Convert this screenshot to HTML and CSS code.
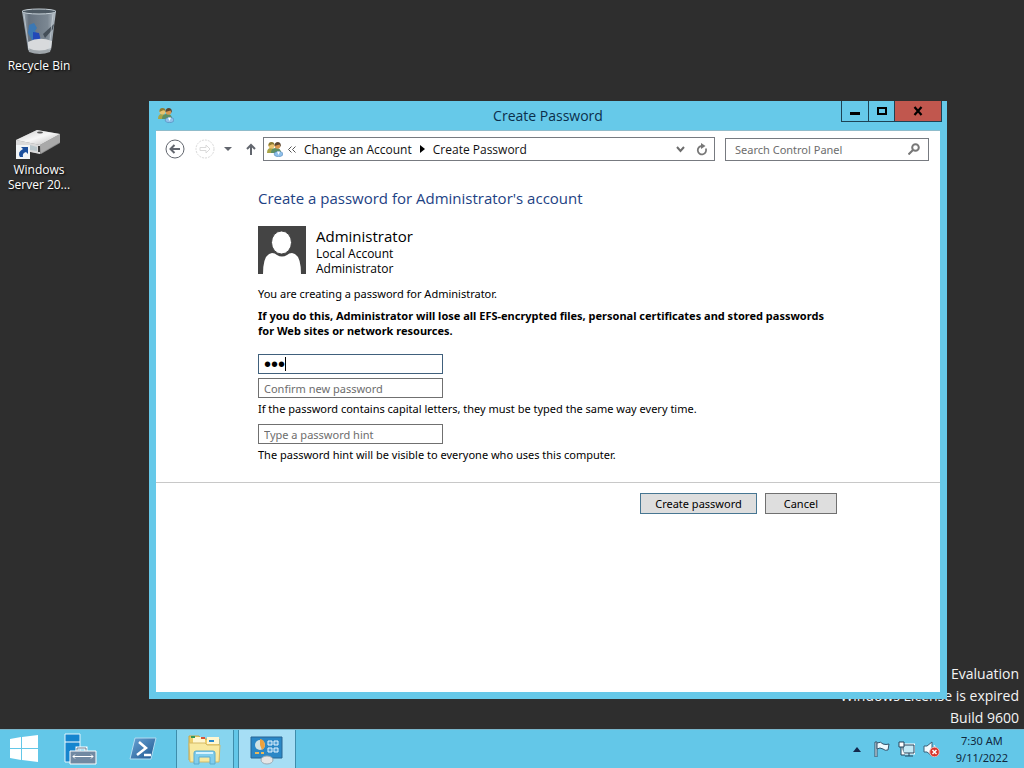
FILE: index.html
```html
<!DOCTYPE html>
<html lang="en">
<head>
<meta charset="UTF-8">
<meta name="viewport" content="width=device-width,initial-scale=1">
<title>Create Password</title>
<link rel="stylesheet" href="styles.css">
</head>
<body>

<!-- shared icon -->
<svg class="defs" width="0" height="0">
  <symbol id="users" viewBox="0 0 16 16">
    <path d="M0 12q0-5 4-5 4 0 4 5z" fill="#a9a548"/>
    <path d="M4 12q0-5 5-5t5 5z" fill="#5f8f64"/>
    <circle cx="4.500" cy="4.500" r="3" fill="#e9c36f"/>
    <path d="M1.500 5q-.5-4 3-4 3 0 3 3-2-1.500-4 0z" fill="#8c7a32"/>
    <circle cx="10.500" cy="5" r="2.800" fill="#d9964e"/>
    <path d="M7.500 5q0-4 3.500-4 3.500.5 2.700 5l-1.200-2.500z" fill="#5b4632"/>
    <ellipse cx="11.500" cy="13" rx="4.300" ry="2.600" fill="#8fc0ea" stroke="#4d83b8" stroke-width=".6"/>
    <path d="M10 10.500l1.500 3.500 1.500-3.500z" fill="#fff"/>
  </symbol>
</svg>

<main class="desktop">
  <div class="shortcuts">
    <a class="shortcut" href="#recycle">
      <svg width="48" height="48" viewBox="0 0 48 48">
        <defs>
          <linearGradient id="bin" x1="0" x2="1"><stop offset="0" stop-color="#a9b5bf"/><stop offset=".2" stop-color="#65717e"/><stop offset=".75" stop-color="#7b8792"/><stop offset="1" stop-color="#b7c0c8"/></linearGradient>
        </defs>
        <path d="M7 3h34l-5 39q-12 5-23 0z" fill="url(#bin)"/>
        <ellipse cx="24" cy="3.500" rx="17" ry="2.500" fill="#4d5963" stroke="#c6d0d7"/>
        <path d="M14 17l5-2 3 5-2 3 4 5-6 6-5-9z" fill="#3b78b4"/>
        <path d="M18 24l6 1 2 8-8 2z" fill="#2349b8"/>
        <path d="M28 26l11-10-1 5-8 9z" fill="#444e58"/>
        <path d="M13 34q11-6 24-1l-1 8q-12 5-23 0z" fill="#d8dadc"/>
        <path d="M13 40q11 5 23 0l-1 4q-10 4-21 0z" fill="#9fa6ab"/>
        <path d="M9 6l5 36M38 6l-4 36" stroke="#d5dde2" stroke-width="1" opacity=".6"/>
      </svg>
      <span>Recycle Bin</span>
    </a>
    <a class="shortcut" href="#server">
      <svg width="48" height="48" viewBox="0 0 48 48">
        <defs>
          <linearGradient id="disk" x2="1" y2="1"><stop offset="0" stop-color="#c9c9c9"/><stop offset=".5" stop-color="#f7f7f7"/><stop offset="1" stop-color="#b5b5b5"/></linearGradient>
        </defs>
        <path d="M1 28L22 18 45 22v9L26 42 1 37z" fill="#8d8d8d"/>
        <path d="M1 28L22 18 45 22 25 33z" fill="url(#disk)"/>
        <path d="M1 28l24 5v9L1 37z" fill="#dadada"/>
        <path d="M25 33l20-11v8L26 41z" fill="#a9a9a9"/>
        <path d="M15 33l7 2v4l-7-1z" fill="#b9c6cb"/>
        <path d="M24 34v6" stroke="#3c3c3c" stroke-width="2"/>
        <ellipse cx="25" cy="20.500" rx="3" ry="1" fill="#555"/>
        <path d="M1 33h14v14H1z" fill="#f1f4f6"/>
        <path d="M5 45q-3-5 3-8l-2-2h7v7l-2-2q-4 1-3 5z" fill="#1b4f9c"/>
      </svg>
      <span>Windows Server 20...</span>
    </a>
  </div>

  <div class="watermark">
    <p>Evaluation</p>
    <p>Windows License is expired</p>
    <p>Build 9600</p>
  </div>

  <section class="window">
    <header class="titlebar">
      <svg class="app-icon" width="16" height="16"><use href="#users"/></svg>
      <h1>Create Password</h1>
      <div class="controls">
        <button class="min" aria-label="Minimize"><svg width="12" height="10"><path d="M1 6h10v3H1z"/></svg></button>
        <button class="max" aria-label="Maximize"><svg width="12" height="10"><path d="M2 2h8v6H2z" fill="none" stroke="#000" stroke-width="2"/></svg></button>
        <button class="close" aria-label="Close"><svg width="12" height="10"><path d="M2.500 1l7 8M9.500 1l-7 8" stroke="#000" stroke-width="2.200"/></svg></button>
      </div>
    </header>

    <div class="page">
      <nav class="navbar">
        <button class="nav-btn" aria-label="Back"><svg width="20" height="20" fill="none" stroke="#62666e"><circle cx="10" cy="10" r="9"/><path d="M15 10H6M9.500 6L5.500 10l4 4" stroke-width="2"/></svg></button>
        <button class="nav-btn forward" aria-label="Forward"><svg width="20" height="20" fill="none" stroke="#dadada"><circle cx="10" cy="10" r="9" stroke-dasharray="2 1"/><path d="M5 8.500h6V6l4 4-4 4v-2.500H5z"/></svg></button>
        <button class="nav-btn recent" aria-label="Recent pages"><svg width="8" height="5"><path d="M0 0h8L4 4z" fill="#62666e"/></svg></button>
        <button class="nav-btn up" aria-label="Up"><svg width="10" height="12" fill="none" stroke="#62666e" stroke-width="2"><path d="M5 12V2M1 6l4-4 4 4"/></svg></button>
        <div class="address">
          <svg width="16" height="16"><use href="#users"/></svg>
          <svg class="more" width="8" height="7" fill="none" stroke="#555"><path d="M3.500 .5l-3 3 3 3M7.500 .5l-3 3 3 3"/></svg>
          <a href="#change">Change an Account</a>
          <svg class="sep" width="5" height="8"><path d="M0 0l5 4-5 4z"/></svg>
          <a href="#create">Create Password</a>
          <div class="address-tools">
            <button class="nav-btn" aria-label="Previous locations"><svg width="9" height="7" fill="none" stroke="#6d6d6d" stroke-width="2"><path d="M1 1l3.500 4L8 1"/></svg></button>
            <button class="nav-btn" aria-label="Refresh"><svg width="12" height="13" fill="none" stroke="#777" stroke-width="1.800"><path d="M9.800 5.500A4.200 4.200 0 1 1 6 3"/><path d="M5 0l4.500 3L5 6z" fill="#777" stroke="none"/></svg></button>
          </div>
        </div>
        <div class="search">
          <input type="search" placeholder="Search Control Panel" aria-label="Search Control Panel">
          <svg width="12" height="12" fill="none" stroke="#777" stroke-width="2"><circle cx="7.500" cy="4.500" r="3.300"/><path d="M5 7l-4.500 4.500"/></svg>
        </div>
      </nav>

      <form class="account">
        <div class="fields">
          <h2>Create a password for Administrator's account</h2>
          <div class="user">
            <svg width="48" height="48" viewBox="0 0 48 48"><path d="M0 0h48v48H0z" fill="#444"/><path d="M5 48q0-20 9-21 3 0 5 2 5 3 10 0 2-2 5-2 9 1 9 21z" fill="#fff"/><ellipse cx="23.500" cy="16.500" rx="10" ry="11.500" fill="#fff" stroke="#444" stroke-width="1"/></svg>
            <div>
              <strong>Administrator</strong>
              <p>Local Account</p>
              <p>Administrator</p>
            </div>
          </div>
          <p class="intro">You are creating a password for Administrator.</p>
          <p class="warning">If you do this, Administrator will lose all EFS-encrypted files, personal certificates and stored passwords for Web sites or network resources.</p>
          <div class="pass-wrap">
            <input class="field current" type="password" value="abc" aria-label="New password">
            <i class="caret"></i>
          </div>
          <input class="field" type="password" placeholder="Confirm new password" aria-label="Confirm new password">
          <p class="note">If the password contains capital letters, they must be typed the same way every time.</p>
          <input class="field" type="text" placeholder="Type a password hint" aria-label="Type a password hint">
          <p class="note">The password hint will be visible to everyone who uses this computer.</p>
        </div>
        <div class="actions">
          <button type="submit" class="btn primary">Create password</button>
          <button type="button" class="btn">Cancel</button>
        </div>
      </form>
    </div>
  </section>
</main>

<footer class="taskbar">
  <button class="start" aria-label="Start">
    <svg width="28" height="28" fill="#fff"><path d="M0 4l11-2v11H0zM12 2l16-2v13H12zM0 14h11v11L0 23zM12 14h16v13l-16-2z"/></svg>
  </button>
  <button class="task" aria-label="Server Manager">
    <svg width="34" height="34"><path d="M1 2h15v28H1z" fill="#1585cf" stroke="#e3f5fc"/><path d="M1 10h15" stroke="#fff"/><path d="M13 19v-3h9v3" fill="none" stroke="#fff" stroke-width="3"/><path d="M13 19v-3h9v3" fill="none" stroke="#667a8e"/><path d="M6 19h26v13H6z" fill="#7189a2" stroke="#fff"/><path d="M9 24.500h20M11 22.500l-2 2 2 2M27 22.500l2 2-2 2" fill="none" stroke="#fff"/></svg>
  </button>
  <button class="task" aria-label="Windows PowerShell">
    <svg width="30" height="26"><defs><linearGradient id="ps" x2="1" y2="1"><stop offset="0" stop-color="#6ba4d6"/><stop offset="1" stop-color="#1c568f"/></linearGradient></defs><path d="M7 2h21l-5 21H2z" fill="url(#ps)" stroke="#b3dcf1"/><path d="M11 6l7 6-9 7M16 19h7" fill="none" stroke="#fff" stroke-width="2.500"/></svg>
  </button>
  <button class="task open" aria-label="File Explorer">
    <svg width="34" height="32"><path d="M1 3h10l2 3h18v21H1z" fill="#edcf6d" stroke="#c6a548"/><path d="M5 4h12v6H5zM19 4h12v7H19z" fill="#fff7d0"/><path d="M3 3h4v2H3z" fill="#349858"/><path d="M13 4h4v2h-4z" fill="#d85436"/><path d="M21 7h5v2h-5z" fill="#2989cc"/><path d="M1 10h16l2 2h13l-1 17H2z" fill="#f8e9a0" stroke="#d4ba68"/><path d="M6 31V20q0-2 2-2h17q2 0 2 2v11h-5v-7H11v7z" fill="#80cdec" stroke="#5aabcf"/><path d="M8 20h17" stroke="#d5f3ff" stroke-width="2"/></svg>
  </button>
  <button class="task open active" aria-label="Control Panel">
    <svg width="34" height="32"><path d="M1 4h31v21H1z" fill="#2b87c6" stroke="#286493"/><circle cx="10" cy="12" r="5" fill="#cfe2e4"/><path d="M10 12V6a6 6 0 0 1 2 11z" fill="#eda13d"/><path d="M5 20h4M11 20h3" stroke="#e9b859" stroke-width="2"/><g fill="#529fd5" stroke="#e4f5ff"><path d="M18 8h4v4h-4zM24 8h4v4h-4zM18 15h4v4h-4zM24 15h4v4h-4z"/></g><ellipse cx="17" cy="27" rx="6" ry="4" fill="#e5e5e6" stroke="#9caab3"/></svg>
  </button>

  <div class="tray">
    <svg width="8" height="5"><path d="M0 5l4-5 4 5z" fill="#13274b"/></svg>
    <svg width="16" height="16" fill="#eefaff" stroke="#34536b"><path d="M1 1h2v15H1z"/><path d="M3 2q4-2 6 1 3 1 6 0l-1 6q-3 1-5-1-3-2-6 0z"/></svg>
    <svg width="17" height="16" fill="#c5eaf6" stroke="#24435b"><path d="M5 4h11v8H5z" stroke="#fff" stroke-width="3"/><path d="M5 4h11v8H5zM7 15h8M11 12v3"/><path d="M1 1h5v5H1zM3 6v8h4" fill="#fff"/></svg>
    <svg width="17" height="16"><path d="M1 5h3l5-4v14l-5-4H1z" fill="#f4fcff" stroke="#3b6078"/><path d="M11 4q2 2 1 5" fill="none" stroke="#fff"/><circle cx="11.500" cy="11" r="4.800" fill="#d9342b" stroke="#f3b2ae"/><path d="M9.500 9l4 4M13.500 9l-4 4" stroke="#fff" stroke-width="1.500"/></svg>
    <div class="clock">
      <time>7:30 AM</time>
      <time>9/11/2022</time>
    </div>
  </div>
</footer>

</body>
</html>
```
FILE: styles.css
```css
* { box-sizing:border-box; }
html,body { margin:0; height:100%; }
body { display:flex; flex-direction:column; background:#2e2e2e; overflow:hidden; color:#000; font:12px/15px 'Open Sans','Noto Sans',sans-serif; }
h1,h2,p { margin:0; font-weight:400; }
button,input { font:inherit; color:inherit; margin:0; }
button { padding:0; border:0; background:none; }
svg { display:block; flex:none; }
a { color:inherit; text-decoration:none; }
.defs { position:absolute; }

/* desktop */
.desktop { position:relative; flex:1; min-height:0; }
.shortcuts { display:flex; flex-direction:column; gap:26px; width:78px; padding-top:8px; }
.shortcut { display:flex; flex-direction:column; align-items:center; gap:2px; height:78px; padding:0 4px; color:#fff; text-align:center; text-shadow:1px 1px 2px #000; }
.watermark { position:absolute; right:5px; bottom:0; color:#f4f4f4; font-size:14px; line-height:22px; text-align:right; }

/* window */
.window { position:absolute; top:101px; right:77px; bottom:30px; left:149px; display:flex; flex-direction:column; padding:0 7px 7px; background:#66c9e9; }
.titlebar { display:grid; grid-template-columns:1fr auto 1fr; height:29px; }
.app-icon { margin:6px 0 0 2px; }
.titlebar h1 { color:#0b2f4c; font-size:14px; line-height:30px; }
.controls { display:flex; justify-self:end; height:21px; margin-right:-2px; border:1px solid #1d4254; border-top:0; }
.controls button { display:flex; align-items:center; justify-content:center; width:27px; border-right:1px solid #1d4254; }
.controls .max { width:26px; }
.controls .close { width:46px; border:0; background:#c1574e; }
.page { flex:1; min-height:0; background:#fff; border-top:1px solid #8fbccb; }

.navbar { display:flex; align-items:center; height:36px; padding:0 11px 0 9px; }
.nav-btn { flex:none; }
.forward { margin-left:10px; }
.recent { margin-left:9px; }
.up { margin:0 7px 0 14px; }
.address { display:flex; align-items:center; flex:1; height:24px; padding:0 6px 0 3px; border:1px solid #777a80; color:#111; }
.more { margin:0 8px 0 5px; }
.sep { margin:0 8px; }
.address-tools { display:flex; align-items:center; gap:11px; margin-left:auto; }
.search { display:flex; align-items:center; width:204px; height:23px; margin-left:10px; padding:0 8px 0 9px; border:1px solid #777a80; }
.search input { flex:1; min-width:0; padding:0; border:0; outline:0; background:none; font-family:'Noto Sans',sans-serif; font-size:11px; }
input::placeholder { color:#6d6d6d; opacity:1; }

/* form */
.account { font-family:'Noto Sans','Open Sans',sans-serif; font-size:11px; }
.fields { padding:20px 103px 20px 102px; border-bottom:1px solid #c8c8c8; }
.fields h2 { color:#1d4284; font-family:'Open Sans',sans-serif; font-size:15px; line-height:22px; }
.user { display:flex; gap:10px; margin-top:17px; font-family:'Open Sans',sans-serif; font-size:12px; }
.user strong { display:block; font-size:15px; font-weight:400; line-height:20px; }
.intro { margin-top:10px; }
.warning { margin:7px 0 16px; font-weight:700; }
.pass-wrap { position:relative; margin-bottom:4px; }
.field { display:block; width:185px; height:20px; padding:0 5px; border:1px solid #707070; border-radius:0; outline:0; background:#fff; }
.field.current { border-color:#40607c; font-family:'Liberation Sans',sans-serif; font-size:20px; }
.caret { position:absolute; top:3px; left:27px; width:1px; height:14px; background:#000; }
.note { margin:3px 0 8px; }
.note:last-child { margin-bottom:0; }
.actions { display:flex; justify-content:flex-end; gap:8px; padding:10px 103px 0; }
.btn { height:21px; padding:0 14px; border:1px solid #707070; background:#dedede; }
.btn:last-child { padding:0 18px; }
.btn.primary { border-color:#477692; }

/* taskbar */
.taskbar { display:flex; flex:none; align-items:stretch; gap:4px; height:39px; background:#63c7e8; border-top:1px solid #79b6cb; color:#10283d; }
.start { width:48px; }
.task { width:58px; }
.start,.task { display:flex; align-items:center; justify-content:center; }
.open { border:solid #3f8dab; border-width:0 1px; background:#87d5ef; }
.active { background:#a6def5; }
.tray { display:flex; align-items:center; gap:8px; margin-left:auto; padding-right:16px; }
.tray > svg:first-child { margin-right:5px; }
.clock { display:flex; flex-direction:column; margin-left:8px; font-family:'Noto Sans',sans-serif; font-size:11px; line-height:17px; text-align:center; }
```
